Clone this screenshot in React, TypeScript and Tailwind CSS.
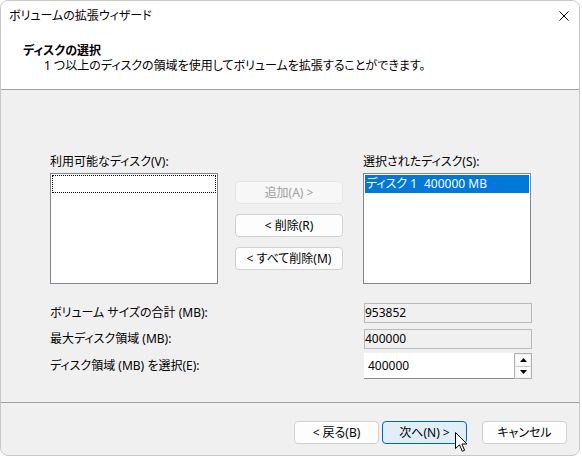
import React from 'react'

const font = "font-['Noto_Sans','Noto_Sans_CJK_JP',sans-serif] [font-feature-settings:'palt']"

function Btn({ children, disabled, primary, className = '' }: { children: React.ReactNode; disabled?: boolean; primary?: boolean; className?: string }) {
  const tone = disabled
    ? 'border-[#e5e5e5] bg-[#f7f7f7] text-[#a0a0a0]'
    : primary
      ? 'border-[#0067c0] bg-[#e0eef9] text-black'
      : 'border-[#d0d0d0] bg-[#fdfdfd] text-black'
  return (
    <div className={`flex h-[23px] items-center justify-center rounded-[4px] border text-[12px] leading-none ${tone} ${className}`}>
      {children}
    </div>
  )
}

function Cursor() {
  return (
    <svg width="14" height="21" viewBox="0 0 14 21" className="absolute left-[455px] top-[432px]">
      <path d="M0.5 0.5 L0.5 16.5 L4.5 12.8 L7.3 19.3 L9.6 18.3 L6.9 12 L12 12 Z" fill="#fff" stroke="#000" strokeWidth="1" strokeLinejoin="miter" />
    </svg>
  )
}

export default function App() {
  return (
    <div className={`relative h-[457px] w-[582px] bg-white ${font}`}>
      <div className="flex h-[456px] w-[580px] flex-col overflow-hidden rounded-[8px] border border-[#c8c8c8] bg-[#f0f0f0] text-black">
        <div className="h-[88px] bg-white">
          <div className="flex h-[30px] items-center justify-between pl-[8px] pr-[10px] text-[12px]">
            <span>ボリュームの拡張ウィザード</span>
            <svg width="10" height="10" viewBox="0 0 10 10">
              <path d="M0.5 0.5 L9.5 9.5 M9.5 0.5 L0.5 9.5" stroke="#000" strokeWidth="1" />
            </svg>
          </div>
          <div className="pl-[22px] pt-[12px] text-[12px] leading-[15px]">
            <div className="font-bold">ディスクの選択</div>
            <div className="pl-[21px]">1 つ以上のディスクの領域を使用してボリュームを拡張することができます。</div>
          </div>
        </div>
        <div className="h-px bg-[#a0a0a0]" />

        <div className="flex h-[312px] flex-col pl-[49px] pt-[64px] text-[12px]">
          <div className="flex">
            <div className="flex w-[168px] flex-col">
              <div className="h-[16px] leading-[16px]">利用可能なディスク(V):</div>
              <div className="mt-[3px] h-[111px] border border-[#828790] bg-white p-px">
                <div className="h-[18px] border border-dotted border-black" />
              </div>
            </div>
            <div className="ml-[17px] flex w-[108px] flex-col gap-[10px] pt-[27px]">
              <Btn disabled>追加(A) &gt;</Btn>
              <Btn>&lt; 削除(R)</Btn>
              <Btn>&lt; すべて削除(M)</Btn>
            </div>
            <div className="ml-[20px] flex w-[168px] flex-col">
              <div className="h-[16px] leading-[16px]">選択されたディスク(S):</div>
              <div className="mt-[3px] h-[111px] border border-[#828790] bg-white p-px">
                <div className="flex h-[18px] items-center bg-[#0078d7] pl-[1px] text-white">
                  <span className="w-[58px]">ディスク 1</span>
                  <span>400000 MB</span>
                </div>
              </div>
            </div>
          </div>

          <div className="mt-[19px] grid grid-cols-[314px_168px] items-center">
            <div className="h-[20px] leading-[20px]">ボリューム サイズの合計 (MB):</div>
            <div className="flex h-[20px] items-center border border-[#b9b9b9] bg-[#f0f0f0]">953852</div>
            <div className="mt-[6px] h-[20px] leading-[20px]">最大ディスク領域 (MB):</div>
            <div className="mt-[6px] flex h-[20px] items-center border border-[#b9b9b9] bg-[#f0f0f0]">400000</div>
            <div className="mt-[4px] h-[26px] leading-[26px]">ディスク領域 (MB) を選択(E):</div>
            <div className="mt-[4px] flex h-[26px]">
              <div className="flex flex-1 items-center border-b border-[#8a8a8a] bg-white pl-[4px]">400000</div>
              <div className="flex w-[18px] flex-col border border-[#b0b0b0] bg-[#f0f0f0] p-px">
                <div className="flex flex-1 items-center justify-center border-b border-[#c8c8c8] bg-[#fafafa]">
                  <svg width="7" height="4" viewBox="0 0 7 4"><path d="M3.5 0 L7 4 L0 4 Z" fill="#000" /></svg>
                </div>
                <div className="flex flex-1 items-center justify-center bg-[#fafafa]">
                  <svg width="7" height="4" viewBox="0 0 7 4"><path d="M0 0 L7 0 L3.5 4 Z" fill="#000" /></svg>
                </div>
              </div>
            </div>
          </div>
        </div>

        <div className="h-px bg-[#a0a0a0]" />
        <div className="flex flex-1 items-start justify-end pr-[12px] pt-[18px] text-[12px]">
          <Btn className="w-[85px]">&lt; 戻る(B)</Btn>
          <Btn primary className="ml-[3px] w-[85px]">次へ(N) &gt;</Btn>
          <Btn className="ml-[15px] w-[85px]">キャンセル</Btn>
        </div>
      </div>
      <Cursor />
    </div>
  )
}
